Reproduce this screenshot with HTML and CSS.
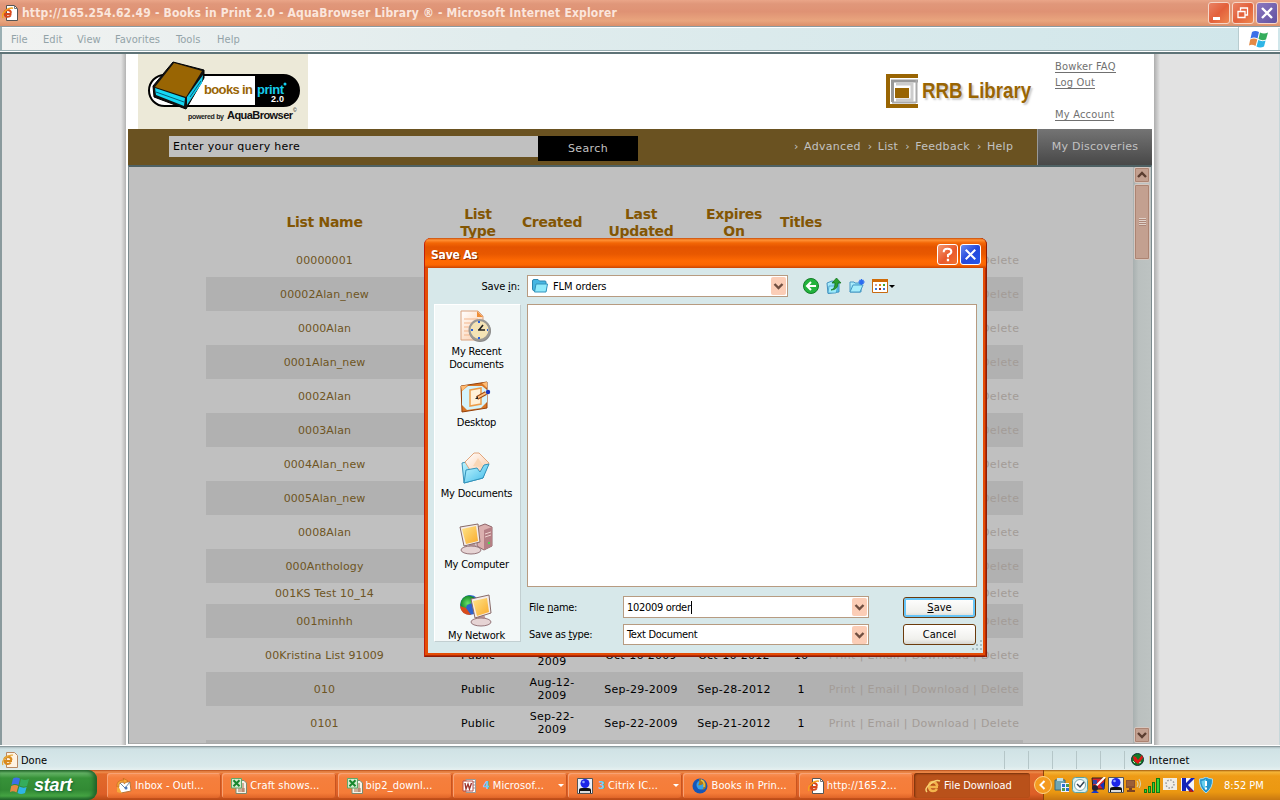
FILE: index.html
```html
<!DOCTYPE html>
<html lang="en">
<head>
<meta charset="utf-8">
<title>Books in Print 2.0</title>
<link rel="stylesheet" href="styles.css">
</head>
<body>
<svg width="0" height="0" class="defs">
  <defs>
    <linearGradient id="gold" x1="0" y1="0" x2="1" y2="1"><stop offset="0" stop-color="#ffe488"/><stop offset="1" stop-color="#f9ab2c"/></linearGradient>
    <linearGradient id="aqua" x1="0" y1="0" x2="1" y2="1"><stop offset="0" stop-color="#c4f7ff"/><stop offset="1" stop-color="#3bb8e8"/></linearGradient>
    <linearGradient id="paper" x1="0" y1="0" x2="1" y2="1"><stop offset="0" stop-color="#fff"/><stop offset="1" stop-color="#fbc9a4"/></linearGradient>
    <radialGradient id="leaf"><stop offset="0" stop-color="#6be36b"/><stop offset="1" stop-color="#128a28"/></radialGradient>
    <symbol id="flag" viewBox="0 0 20 18">
      <path d="M3 2Q6 0 10 2L8.500 8.500Q5 6.500 1.500 8.500Z" fill="#3b6fe8"/>
      <path d="M11 2.500Q15 4.500 19 2.500L17 9.500Q13 11 9.500 9Z" fill="#35ad5c"/>
      <path d="M1.200 9.500Q5 7.500 8.300 9.500L6.500 16Q3 14 0 15.500Z" fill="#e58a45"/>
      <path d="M9.300 10Q13 12 16.600 10.500L15 16.500Q11 18.500 7.500 16.500Z" fill="#2fb5e6"/>
    </symbol>
    <symbol id="ie" viewBox="0 0 16 16">
      <path d="M4.500.5h8l3 3v12h-11z" fill="#fff" stroke="#555"/><path d="M12.500.5v3h3" fill="none" stroke="#777"/>
      <path d="M9.500 9H2.500Q3 11.800 5.800 11.800 7.800 11.800 8.800 10.300M2.400 7.800Q3 5 5.800 5T9 7.800" fill="none" stroke="#d8461a" stroke-width="2"/>
      <path d="M1 13Q-.8 10 3 6.200T11 3.200" fill="none" stroke="#f6a21e" stroke-width="1.400"/>
    </symbol>
    <symbol id="excel" viewBox="0 0 16 16">
      <path d="M5 2.500h8l2.500 2.500v10.500H5z" fill="#f6f3e8" stroke="#7a8a70"/><path d="M7 11h7M7 13h7M12 5v9" stroke="#a56b4a"/>
      <path d="M.5.500h10v9.500H.5z" fill="#d3ecd0" stroke="#5fa968"/><path d="M2.500 2.200l6 6M8.500 2.200l-6 6" stroke="#17862c" stroke-width="2"/>
    </symbol>
    <symbol id="citrix" viewBox="0 0 16 16">
      <path d="M.5.500h15v15H.5z" fill="#e9eef8" stroke="#555"/><path d="M2 15v-3q0-2 3-2h6q3 0 3 2v3z" fill="#111"/><path d="M3 13h10v2H3z" fill="#ddd"/><circle cx="8" cy="5.500" r="4.500" fill="#1b25e8"/><circle cx="6.500" cy="4" r="1.300" fill="#8ea2ff"/>
    </symbol>
    <symbol id="down" viewBox="0 0 15 18"><rect width="15" height="18" rx="2" fill="#fbcdb6"/><path d="M3.500 7l4 4 4-4" fill="none" stroke="#6f4e40" stroke-width="2.400"/></symbol>
  </defs>
</svg>

<div class="screen">
  <header class="titlebar">
    <svg class="i16"><use href="#ie"/></svg>
    <span class="title-text">http://165.254.62.49 - Books in Print 2.0 - AquaBrowser Library ® - Microsoft Internet Explorer</span>
    <div class="win-buttons">
      <svg viewBox="0 0 20 20" class="wb red"><path d="M4 14h7v3H4z" fill="#fff"/></svg>
      <svg viewBox="0 0 20 20" class="wb red"><path d="M7.500 7.500V5h7v7H12M5 8.500h7v6H5z" fill="none" stroke="#fff" stroke-width="1.300"/></svg>
      <svg viewBox="0 0 20 20" class="wb violet"><path d="M5 5l10 10M15 5L5 15" stroke="#fff" stroke-width="2.400"/></svg>
    </div>
  </header>

  <nav class="menubar">
    <span class="m1">File</span><span class="m2">Edit</span><span class="m3">View</span><span class="m4">Favorites</span><span class="m5">Tools</span><span class="m6">Help</span>
    <div class="throbber"><svg width="20" height="18"><use href="#flag"/></svg></div>
  </nav>

  <main class="viewport">
    <div class="page">
      <div class="masthead">
        <div class="logo">
          <svg width="170" height="75" viewBox="0 0 170 75">
            <rect x="11" y="21" width="150" height="31" rx="15.500" fill="#fff" stroke="#000" stroke-width="2"/>
            <path d="M117 21h28.500a15.500 15.500 0 0 1 0 31H117z" fill="#000"/>
            <path d="M35 8L66 16 66 24 48 55 16 43 15 32Z" fill="#111" stroke="#000" stroke-linejoin="round"/>
            <path d="M36 9L64 17 48 43 17 33Z" fill="#996503"/>
            <path d="M17 34L47 44 46 52 18 41Z" fill="#15d8f4"/><path d="M49 43L65 21 64 29 49 51Z" fill="#15cdec"/>
            <path d="M18 38l28 10M52 43l11-16" stroke="#085c78"/>
            <text x="66" y="40" class="lg-books" textLength="49">books in</text>
            <text x="119" y="40" class="lg-print" textLength="27">print</text><circle cx="147" cy="30" r="1.500" fill="#15cdec"/>
            <text x="133" y="48" class="lg-ver" textLength="13">2.0</text>
            <text x="50" y="65" class="lg-pow" textLength="36">powered by</text>
            <text x="89" y="65" class="lg-aqua" textLength="66">AquaBrowser</text>
            <text x="155" y="58" class="lg-c">©</text>
          </svg>
        </div>
        <div class="library">
          <svg width="32" height="34" viewBox="0 0 32 34"><path d="M32 2H2v30h30" fill="none" stroke="#996503" stroke-width="4"/><path d="M32 7H6.500v21" fill="none" stroke="#999" stroke-width="3"/><path d="M10 10h16v16H10" fill="none" stroke="#ccc" stroke-width="3"/><path d="M30.500 6v23M6 28.500h24" stroke="#aaa" stroke-width="2"/><path d="M9 14h14v10H9z" fill="#996503"/></svg>
          <span>RRB Library</span>
        </div>
        <div class="account"><a>Bowker FAQ</a><a>Log Out</a><a class="apart">My Account</a></div>
      </div>

      <div class="searchbar">
        <div class="query">Enter your query here</div>
        <div class="search-btn">Search</div>
        <div class="links"><span>Advanced</span><span>List</span><span>Feedback</span><span>Help</span></div>
        <div class="discoveries">My Discoveries</div>
      </div>

      <div class="results">
        <div class="table">
          <div class="row head"><span>List Name</span><span>List<br>Type</span><span>Created</span><span>Last<br>Updated</span><span>Expires<br>On</span><span>Titles</span><span></span></div>
          <div class="row"><b>00000001</b><i>Print | Email | Download | Delete</i></div>
          <div class="row"><b>00002Alan_new</b><i>Print | Email | Download | Delete</i></div>
          <div class="row"><b>0000Alan</b><i>Print | Email | Download | Delete</i></div>
          <div class="row"><b>0001Alan_new</b><i>Print | Email | Download | Delete</i></div>
          <div class="row"><b>0002Alan</b><i>Print | Email | Download | Delete</i></div>
          <div class="row"><b>0003Alan</b><i>Print | Email | Download | Delete</i></div>
          <div class="row"><b>0004Alan_new</b><i>Print | Email | Download | Delete</i></div>
          <div class="row"><b>0005Alan_new</b><i>Print | Email | Download | Delete</i></div>
          <div class="row"><b>0008Alan</b><i>Print | Email | Download | Delete</i></div>
          <div class="row"><b>000Anthology</b><i>Print | Email | Download | Delete</i></div>
          <div class="row short"><b>001KS Test 10_14</b><i>Print | Email | Download | Delete</i></div>
          <div class="row"><b>001minhh</b><i>Print | Email | Download | Delete</i></div>
          <div class="row"><b>00Kristina List 91009</b><span>Public</span><span>Oct-16-<br>2009</span><span>Oct-16-2009</span><span>Oct-16-2012</span><span>16</span><i>Print | Email | Download | Delete</i></div>
          <div class="row"><b>010</b><span>Public</span><span>Aug-12-<br>2009</span><span>Sep-29-2009</span><span>Sep-28-2012</span><span>1</span><i>Print | Email | Download | Delete</i></div>
          <div class="row"><b>0101</b><span>Public</span><span>Sep-22-<br>2009</span><span>Sep-22-2009</span><span>Sep-21-2012</span><span>1</span><i>Print | Email | Download | Delete</i></div>
          <div class="row last"></div>
        </div>
        <div class="scroll">
          <div class="arrow"><svg width="12" height="12" viewBox="0 0 12 12"><path d="M2 8l4-4 4 4" fill="none" stroke="#5b3d30" stroke-width="2.400"/></svg></div>
          <div class="thumb"><div class="grip"></div></div>
          <div class="arrow bottom"><svg width="12" height="12" viewBox="0 0 12 12"><path d="M2 4l4 4 4-4" fill="none" stroke="#5b3d30" stroke-width="2.400"/></svg></div>
        </div>
      </div>
    </div>
  </main>

  <footer class="status">
    <svg class="i16" viewBox="0 0 16 16"><path d="M4.500.500h8l3 3v12h-11z" fill="#fff3e2" stroke="#b98962"/><path d="M10 9H2.500Q3 12 5.700 12 7.700 12 8.700 10.500M2.300 7.500Q3 4.800 6 4.800T9.500 8" fill="none" stroke="#d98a1c" stroke-width="2.200"/><path d="M1 13Q-.8 10 3 6.200T11 3.200" fill="none" stroke="#e8ab3c" stroke-width="1.200"/></svg>
    <span class="done">Done</span>
    <div class="panes"><s></s><s></s><s></s><s></s><s></s></div>
    <div class="zone"><svg width="13" height="13" viewBox="0 0 13 13"><circle cx="6.500" cy="6.500" r="6" fill="#137a26" stroke="#133"/><path d="M2 3l3 1 2 3 4-5 1 3-5 6-4-3z" fill="#e01818"/><path d="M2 8l2 2M8 10l2-1" stroke="#bfe6c0"/></svg><span>Internet</span></div>
  </footer>

  <footer class="taskbar">
    <div class="start"><svg width="20" height="19" viewBox="0 0 20 18"><use href="#flag"/></svg><span>start</span></div>
    <div class="tasks">
      <div class="task"><svg class="i16" viewBox="0 0 16 16"><path d="M3 4h11l1 9-10 2-3-2z" fill="#fff" stroke="#b8763a"/><path d="M3 4l6 6 5-6" fill="none" stroke="#6b8aa8"/><path d="M1 9q-1-7 7-7l-1-2 5 3-4 3V4Q2 4 3 9z" fill="#f6a93a" stroke="#b35b12" stroke-width=".5"/><path d="M1 9v5l5 1.500-3-6z" fill="#f6a93a"/><circle cx="10" cy="10" r="1.500" fill="#4a76b8"/></svg><span>Inbox - Outl...</span></div>
      <div class="task"><svg class="i16"><use href="#excel"/></svg><span>Craft shows...</span></div>
      <div class="task"><svg class="i16"><use href="#excel"/></svg><span>bip2_downl...</span></div>
      <div class="task"><svg class="i16" viewBox="0 0 16 16"><path d="M4 1.500h9.500v13H4z" fill="#fff" stroke="#999"/><path d="M11 4h2M11 7h2M11 10h2" stroke="#999"/><path d="M1 3h10v10H1z" fill="#fff" stroke="#b64a42"/><path d="M3 5l1 6 2-5 1.500 5 2-6" fill="none" stroke="#9e3630" stroke-width="1.400"/></svg><em>4</em><span>Microsof...</span><u></u></div>
      <div class="task"><svg class="i16"><use href="#citrix"/></svg><em>3</em><span>Citrix IC...</span><u></u></div>
      <div class="task"><svg class="i16" viewBox="0 0 16 16"><circle cx="8" cy="8" r="7.500" fill="#1656b8"/><circle cx="9" cy="7" r="4.500" fill="#35a0e6"/><path d="M7 1q5 0 7 5 1 5-4 6 3-3 1-6-3 2-5 1 2-2 1-6z" fill="#a8781c"/><path d="M9 2q4 1 3 7" fill="none" stroke="#ecc23c" stroke-width="1.500"/></svg><span>Books in Prin...</span></div>
      <div class="task"><svg class="i16"><use href="#ie"/></svg><span>http://165.2...</span></div>
      <div class="task active"><svg class="i16" viewBox="0 0 16 16"><path d="M13 9H4q.5 4 4 4 2.500 0 4-2M4 7.500Q5 4 8 4t4.500 4" fill="none" stroke="#f3b54c" stroke-width="2.500"/><path d="M2 14q-3-3 3-8t10-3" fill="none" stroke="#f8d274" stroke-width="1.500"/></svg><span>File Download</span></div>
    </div>
    <div class="tray">
      <svg class="chev" viewBox="0 0 18 18"><circle cx="9" cy="9" r="8.500" fill="#f49a1e" stroke="#fcd48a"/><path d="M10.500 5L6.500 9l4 4" fill="none" stroke="#fff" stroke-width="2"/></svg>
      <svg class="i16" viewBox="0 0 16 16"><path d="M1 3h10v10H1z" fill="#6fa6b4" stroke="#3e6876"/><path d="M3 1h6v3H3z" fill="#bfe0ea"/><path d="M7 6h8v9H7z" fill="#eef"/><path d="M8 7h3v3H8zM12 11h3v3h-3z" fill="#2a6fd0"/><path d="M12 7h3v3h-3zM8 11h3v3H8z" fill="#4a9c50"/></svg>
      <svg class="i16" viewBox="0 0 16 16"><rect x=".5" y=".5" width="15" height="15" rx="3" fill="#d9eeee" stroke="#59a3a5"/><circle cx="8" cy="8" r="5.500" fill="#fff" stroke="#7ca9ae"/><path d="M5 7l3 3 4-5" fill="none" stroke="#345" stroke-width="1.500"/></svg>
      <svg class="i16" viewBox="0 0 16 16"><path d="M2 1h13l-1 11H3z" fill="#d4252d" stroke="#222"/><path d="M15 0L5 10" stroke="#fff" stroke-width="2"/><path d="M10 8l4-3v8" fill="#1533c0"/><circle cx="5" cy="11" r="3" fill="#223"/><path d="M1 16q4-5 8 0" fill="#1537c8"/><path d="M3 3h4v4H3z" fill="#3545a5"/></svg>
      <svg class="i16"><use href="#citrix"/></svg>
      <svg class="i16" viewBox="0 0 16 16"><path d="M0 3h9v8H0z" fill="#8b5230"/><path d="M1 4h7v5H1z" fill="#9c6038"/><path d="M3 11h3v2h3v2H1v-2h2z" fill="#7c4223"/><path d="M11 4q2 3 0 6M13 2q3 5 0 9" fill="none" stroke="#d8d0a8" stroke-width="1.200"/></svg>
      <svg class="i16" viewBox="0 0 16 16"><path d="M0 12h3v4H0zM4 9h3v7H4zM8 5h3v11H8zM12 1h4v15h-4z" fill="#117a12"/><path d="M1 13h1v2H1zM5 10h1v5H5zM9 6h1v9H9zM13 2h2v13h-2z" fill="#35d236"/></svg>
      <svg class="i16" viewBox="0 0 16 16"><path d="M1 1h14v12H1z" fill="#f0ede5"/><circle cx="8" cy="7" r="4" fill="none" stroke="#999" stroke-width="1.500" stroke-dasharray="1.500 1.600"/></svg>
      <svg class="i16" viewBox="0 0 16 16"><path d="M1 1h13v13H1z" fill="#f3f3fa"/><path d="M2 1h4v5l5-5h4L8 8l6 6H9L6 10v4H2z" fill="#1524b8"/><path d="M10 11l4 4h-5z" fill="#b01818"/></svg>
      <svg class="i16" viewBox="0 0 16 16"><path d="M8 0q3 2 6.500 2Q15 11 8 16 1 11 1.500 2 5 2 8 0z" fill="#2394cc" stroke="#a7dcf0"/><path d="M8 2v11q-5-4-4.500-9Q6 4 8 2z" fill="#68d0ee"/><path d="M8 4v5M8 10.500v2" stroke="#fff" stroke-width="2"/></svg>
      <span class="clock">8:52 PM</span>
    </div>
  </footer>

  <section class="dialog">
    <div class="dlg-title"><span>Save As</span>
      <svg class="db help" viewBox="0 0 20 20"><path d="M6 7.500Q6 4 10 4t4 3.200Q14 9 10.500 10.500V13" fill="none" stroke="#fff" stroke-width="2.200"/><path d="M9.300 14.500h2.400V17H9.300z" fill="#fff"/></svg>
      <svg class="db close" viewBox="0 0 20 20"><path d="M5 5l10 10M15 5L5 15" stroke="#fff" stroke-width="2.200"/></svg>
    </div>
    <div class="dlg-body">
      <div class="tool-row">
        <label>Save <u>i</u>n:</label>
        <div class="combo folder">
          <svg width="16" height="14" viewBox="0 0 16 14"><path d="M.5 2Q.5.500 2 .500h4L7.500 2H13q1 0 1 1v9H3Q.5 12 .5 10z" fill="#46b6e2" stroke="#2d86ae"/><path d="M4 5h11.500l-1.500 8H2.500z" fill="#90eafb" stroke="#3292bc"/></svg>
          <span>FLM orders</span><svg class="drop"><use href="#down"/></svg>
        </div>
        <div class="tools">
          <svg class="i16" viewBox="0 0 16 16"><circle cx="8" cy="8" r="7.500" fill="#22b33d" stroke="#147d28"/><path d="M13 8H4.500M8 4L4 8l4 4" fill="none" stroke="#fff" stroke-width="2"/></svg>
          <svg class="i16" viewBox="0 0 16 16"><path d="M1 5l5-2 7 2v9L2 15.500z" fill="url(#aqua)" stroke="#4292c0"/><path d="M3 8h9l-2 7H2z" fill="#9ceafb" stroke="#4292c0" stroke-width=".7"/><path d="M5 12q4-1 4-7H6l4.500-5L15 5h-3q0 7-7 7z" fill="#2aa02f" stroke="#0b6f18" stroke-width=".7"/></svg>
          <svg class="i16" viewBox="0 0 16 16"><path d="M1 4h4l1 1h6v9H1z" fill="url(#aqua)" stroke="#4698c4"/><path d="M4 7h10l-3 7H1z" fill="#a5edfb" stroke="#4698c4"/><path d="M12.500 1v6M9.500 4h6M10.500 2l4 4M14.500 2l-4 4" stroke="#2b6cf0" stroke-width="1.300"/></svg>
          <svg class="views" viewBox="0 0 24 16"><path d="M.5 1.500h15v13H.5z" fill="#fff" stroke="#c86a10"/><path d="M0 1h16v3H0z" fill="#d06a06"/><path d="M3 6h2v2H3z" fill="#c9a0a0"/><path d="M7 6h2v2H7z" fill="#e08a10"/><path d="M11 6h2v2h-2z" fill="#3ba52c"/><path d="M3 10h2v2H3z" fill="#3779e0"/><path d="M7 10h2v2H7z" fill="#a32b12"/><path d="M11 10h2v2h-2z" fill="#3c73d0"/><path d="M17 7h6l-3 3z" fill="#000"/></svg>
        </div>
      </div>
      <div class="work">
        <aside class="places">
          <div class="place"><svg viewBox="0 0 32 32"><path d="M2 1h17l5 5v24H2z" fill="url(#paper)" stroke="#d9a27e"/><path d="M18 1l6 6h-6z" fill="#ef8e37"/><path d="M5 9h14M5 13h12M5 17h8M5 21h6M5 25h7" stroke="#f3b78d"/><circle cx="21" cy="21" r="11" fill="#888"/><circle cx="20.500" cy="20" r="10" fill="#f4e3b5" stroke="#9a9894" stroke-width="2"/><path d="M20 20l4-5M19 20h7" stroke="#222" stroke-width="1.600"/><path d="M20 11v2M20 27v2M12 20h2M28 20h1" stroke="#2860dc" stroke-width="2"/></svg><span>My Recent<br>Documents</span></div>
          <div class="place"><svg viewBox="0 0 32 32"><path d="M2 5l26-4v26L3 31z" fill="#d77627" stroke="#954109"/><path d="M3 10l6-5h14l5 4v12l-6 6-14 2-5-5z" fill="#d4f3fb"/><path d="M2 5l7-1-6 6zM23 2l5-1v6z" fill="#ffbd75"/><path d="M11 9l11-2v16l-11 2z" fill="#fff0d8" stroke="#ed9d4a" stroke-width="1.500"/><path d="M18 17l9-5" stroke="#a34b12" stroke-width="4"/><path d="M18 17l9-5" stroke="#ffc180" stroke-width="2"/><path d="M16 18l3-3v3z" fill="#222"/><circle cx="29" cy="11" r="2.200" fill="#1a35bd"/></svg><span>Desktop</span></div>
          <div class="place"><svg viewBox="0 0 32 32"><path d="M3 11l9-2 16 3-4 14-19 5z" fill="url(#aqua)" stroke="#3c94b9"/><path d="M6 10L15 1h5l10 10-4 9-12 3z" fill="url(#paper)" stroke="#e1a67c"/><path d="M14 14l5-8 7 10" fill="#fad6b5"/><path d="M5 31l2-13 11-2 3 4 4-7 5-1-6 14z" fill="url(#aqua)" stroke="#3293bb"/></svg><span>My Documents</span></div>
          <div class="place"><svg viewBox="0 0 32 32"><path d="M18 4l8-3 7 3v19l-8 4-7-4z" fill="#dbb0af" stroke="#8e6569"/><path d="M25 7l8-3v19l-8 4z" fill="#b57f85"/><path d="M26 11l6-2M26 14l6-2" stroke="#efd2cf"/><circle cx="30" cy="20" r="1.200" fill="#46e04c"/><path d="M10 20h6l2 6H9z" fill="#bd999b"/><ellipse cx="12" cy="27" rx="10" ry="4" fill="#e6d4d4" stroke="#957579"/><path d="M1 4l18-3 2 18-16 4z" fill="#f4ece8" stroke="#876a69"/><path d="M3 6l14-3 2 15-12 3z" fill="url(#gold)"/></svg><span>My Computer</span></div>
          <div class="place"><svg viewBox="0 0 32 32"><circle cx="11" cy="11" r="10" fill="#2d63ce"/><path d="M4 4q5-5 12 0l-3 5-5 2-2 6Q-2 11 4 4z" fill="url(#leaf)"/><path d="M1 12l6 2 5 7Q2 21 1 12z" fill="#d94c1b"/><path d="M19 20h6l2 6h-9z" fill="#bd999b"/><ellipse cx="22" cy="28" rx="10" ry="4" fill="#e6d4d4" stroke="#957579"/><path d="M12 5l18-4 2 18-16 5z" fill="#f4ece8" stroke="#876a69"/><path d="M14 7l14-3 2 14-12 4z" fill="url(#gold)"/></svg><span>My Network</span></div>
        </aside>
        <div class="right">
          <div class="files"></div>
          <div class="fields">
            <label>File <u>n</u>ame:</label><div class="combo"><span class="caret">102009 order</span><svg class="drop"><use href="#down"/></svg></div><div class="button default"><span><u>S</u>ave</span></div>
            <label>Save as <u>t</u>ype:</label><div class="combo"><span>Text Document</span><svg class="drop"><use href="#down"/></svg></div><div class="button"><span>Cancel</span></div>
          </div>
        </div>
      </div>
      <svg class="resize" viewBox="0 0 12 12"><path d="M9 0h2v2H9zM5 4h2v2H5zM9 4h2v2H9zM1 8h2v2H1zM5 8h2v2H5zM9 8h2v2H9z" fill="#a7bcc0"/></svg>
    </div>
  </section>
</div>
</body>
</html>
```

FILE: styles.css
```css
* { box-sizing: border-box; }
body { margin: 0; overflow: hidden; font-family: "DejaVu Sans Condensed", "DejaVu Sans", sans-serif; font-size: 11px; color: #000; }
.defs { position: absolute; }
.screen { position: relative; width: 1280px; height: 800px; display: flex; flex-direction: column; background: #e2e2e2; }
.i16 { width: 16px; height: 16px; flex: none; }
svg { display: block; flex: none; }
span { white-space: nowrap; }

.titlebar { height: 26px; flex: none; display: flex; align-items: center; padding: 0 2px; background: linear-gradient(#eaa588 0, #e0977a 15%, #df9274 45%, #e9a57e 80%, #dc8f6a 100%); }
.title-text { margin-left: 4px; font-weight: bold; font-size: 12px; letter-spacing: .18px; color: #fbe6dc; }
.win-buttons { margin-left: auto; display: flex; gap: 2px; }
.wb { width: 22px; height: 22px; border: 1px solid #f6d6c8; border-radius: 3px; }
.red { background: linear-gradient(135deg, #e98365, #e3603b 50%, #ee8850); }
.violet { background: linear-gradient(135deg, #8a78c0, #6252a0); }

.menubar { height: 28px; flex: none; display: flex; align-items: center; padding: 0 2px 2px 11px; color: #93a3a8; background: linear-gradient(90deg, #f1f2f1, #e0eced 40%, #d0e6ea); border-top: 1px solid #8c9ba0; border-bottom: 2px solid #5e7377; box-shadow: inset 0 -1px #fff, inset 0 -2px #9aafb3, inset 2px 0 #9aafb3, inset 0 1px #fff; }
.menubar span { flex: none; padding-top: 1px; letter-spacing: .05px; }
.m1 { width: 32px; } .m2 { width: 34px; } .m3 { width: 38px; } .m4 { width: 61px; } .m5 { width: 41px; }
.throbber { margin-left: auto; width: 40px; height: 23px; background: #fff; border-left: 1px solid #b8cccf; display: flex; align-items: center; justify-content: center; }

.viewport { height: 691px; flex: none; padding: 0 118px 0 120px; border-left: 2px solid #8a9a9d; border-right: 1px solid #c7d7da; background: #e2e2e2; }
.page { width: 1039px; height: 691px; margin-left: -1px; padding: 0 8px 0 7px; background: linear-gradient(90deg, #e2e2e2 0, #b4b4b4 5px, #fff 5px, #fff 1033px, #adadad 1033px, #e2e2e2 1039px); }
.masthead { height: 75px; display: flex; padding-left: 10px; }
.logo { width: 170px; height: 75px; background: #ece9d8; }
.lg-books, .lg-print { font: bold 13px "Liberation Sans", sans-serif; fill: #996503; }
.lg-print { fill: #15cdec; }
.lg-ver { font: bold 9px "Liberation Sans", sans-serif; fill: #fff; }
.lg-pow { font: bold 7px "Liberation Sans", sans-serif; fill: #222; }
.lg-aqua { font: bold 11px "Liberation Sans", sans-serif; fill: #111; }
.lg-c { font: 5px "Liberation Sans", sans-serif; }
.library { margin-left: 578px; padding-top: 20px; width: 169px; display: flex; gap: 4px; color: #996503; font: bold 22px/34px "Liberation Sans", sans-serif; text-shadow: 2px 2px 2px #ccc; }
.library span { transform: scaleX(.85); transform-origin: left; }
.account { display: flex; flex-direction: column; align-items: flex-start; padding-top: 6px; color: #707070; letter-spacing: .2px; }
.account a { height: 13px; line-height: 13px; border-bottom: 1px solid #707070; margin-bottom: 3px; white-space: nowrap; }
.account .apart { margin-top: 16px; }

.searchbar { height: 36px; display: flex; align-items: flex-start; background: #6a5221; font-family: "DejaVu Sans", sans-serif; color: #c2c2c2; }
.query { margin: 7px 0 0 41px; width: 369px; height: 21px; padding-left: 4px; line-height: 22px; background: #c0c0c0; color: #000; letter-spacing: .28px; }
.search-btn { margin-top: 7px; width: 100px; height: 25px; line-height: 26px; text-align: center; background: #000; letter-spacing: .4px; }
.links { margin-left: 156px; width: 243px; display: flex; line-height: 35px; letter-spacing: .3px; }
.links span::before { content: "›"; display: inline-block; width: 10px; line-height: 1; }
.links span { margin-right: 7px; }
.discoveries { width: 115px; height: 36px; line-height: 35px; text-align: center; border-left: 1px solid #999; background: linear-gradient(#747474, #484848); letter-spacing: .25px; }

.results { height: 579px; display: flex; border: 1px solid #7b8a8e; border-top: 2px solid #4e6164; border-bottom-color: #aaa; background: #c0c0c0; overflow: hidden; padding-left: 77px; font-family: "DejaVu Sans", sans-serif; }
.table { width: 817px; padding-top: 37px; height: 576px; overflow: hidden; }
.row { height: 34px; display: grid; grid-template-columns: 237px 70px 78px 100px 86px 48px 198px; align-items: center; text-align: center; line-height: 13px; }
.row:nth-child(odd) { background: #b1b1b1; }
.row span { letter-spacing: .25px; }
.row.head { height: 39px; padding-bottom: 2px; background: none; color: #835604; font-weight: bold; font-size: 14px; line-height: 17px; }
.row.head span { letter-spacing: -.3px; }
.row b { font-weight: normal; color: #6e5523; letter-spacing: .1px; }
.row i { font-style: normal; color: #a39c97; grid-column: 7; white-space: nowrap; letter-spacing: .36px; }
.row.short { height: 21px; }
.row.last { height: 4px; }
.scroll { margin-left: auto; width: 18px; height: 576px; padding: 0 1px; display: flex; flex-direction: column; gap: 1px; background: linear-gradient(90deg, #a8b0b0, #bac0bf 30%, #bdc3c2); }
.arrow, .thumb { border: 1px solid #d5c7c0; border-radius: 2px; outline: 1px solid #ad8472; outline-offset: -2px; background: #c3a090; display: flex; align-items: center; justify-content: center; }
.arrow { height: 16px; }
.thumb { height: 76px; }
.bottom { margin-top: auto; }
.grip { width: 7px; height: 8px; background: repeating-linear-gradient(#e0d2ca 0 1px, #ad8778 1px 2px); }

.status { height: 25px; flex: none; display: flex; align-items: center; padding: 3px 0 0 2px; border-top: 1px solid #fff; background: linear-gradient(#9aa8ab 0, #d0e2e5 3px, #d9e9eb 20px, #e6f0f0); box-shadow: inset 0 1px #8c9b9f; }
.done { margin-left: 3px; padding-top: 1px; }
.panes { margin-left: auto; display: flex; }
.panes s { width: 24px; height: 18px; border-left: 1px solid #b5c6c8; }
.zone { width: 156px; height: 18px; display: flex; align-items: center; gap: 5px; border-left: 1px solid #b5c6c8; padding-left: 6px; }
.zone span { letter-spacing: .15px; padding-top: 1px; }

.taskbar { height: 30px; flex: none; display: flex; background: linear-gradient(#b84c18 0, #ee8d4d 2px, #e26a2b 4px, #dd5f27 24px, #b94a16 30px); color: #fff; }
.start { width: 97px; height: 30px; display: flex; align-items: center; padding-left: 10px; gap: 4px; border-radius: 0 9px 9px 0; background: linear-gradient(#2c7030, #66b467 3px, #379239 8px, #328a34 20px, #45a443 26px, #21682a); box-shadow: inset -3px 0 4px #1f602a; }
.start span { font: italic bold 18px/28px "Liberation Sans", sans-serif; letter-spacing: -.2px; text-shadow: 1px 1px 2px #163; }
.tasks { margin-left: 10px; width: 936px; display: flex; padding-top: 3px; gap: 1.300px; }
.task { width: 114px; height: 25px; flex: none; display: flex; align-items: center; padding-left: 9px; border-radius: 3px; background: linear-gradient(#f99258, #f57f3d 5px, #f57c38 20px, #df6428); box-shadow: inset 1px 1px #f8a274, inset -1px 0 #c95420; }
.task span { margin-left: 3px; letter-spacing: .12px; }
.task em { margin-left: 5px; font-style: normal; font-weight: bold; color: #69cdfa; }
.task em + span { margin-left: 3px; }
.task u { margin: 0 3px 0 auto; border: 3px solid transparent; border-top-color: #fff; border-bottom: 0; }
.task.active { width: 116px; padding-left: 11px; background: #b9511a; box-shadow: inset 1px 1px 2px #74300b; }
.task.active span { letter-spacing: -.1px; }
.tray { width: 237px; height: 30px; display: flex; align-items: center; gap: 2px; background: linear-gradient(#a35c10, #f5b538 2px, #ee9b16 6px, #eb9811 22px, #c87811); border-left: 1px solid #8d430d; }
.chev { width: 18px; height: 18px; margin-left: -10px; }
.clock { margin-left: 8px; }

.dialog { position: absolute; left: 424px; top: 238px; width: 563px; height: 419px; padding: 0 4px 4px; border-radius: 7px 7px 0 0; background: #e44c05; box-shadow: inset 1px 0 #c31e0a, inset -1px 0 #8e1c05, inset -2px 0 #b52b05, inset 0 -1px #8e1c05, inset 0 -2px #b52b05; }
.dlg-title { height: 30px; margin: 0 -3px; display: flex; align-items: center; gap: 2px; padding: 2px 5px 0 6px; border-radius: 6px 6px 0 0; background: linear-gradient(#c64c0b 0, #ff9235 2px, #f36605 5px, #e45400 9px, #e85800 16px, #ff6a03 23px, #fb6602 27px, #c94403 30px); color: #fff; font-weight: bold; font-size: 12px; }
.dlg-title span { margin-right: auto; padding-top: 2px; letter-spacing: -.2px; text-shadow: 1px 1px #8f2c00; }
.db { width: 21px; height: 21px; border: 1px solid #fff; border-radius: 3px; }
.help { background: linear-gradient(135deg, #f39a73, #e9592b 55%, #f1732f); }
.close { background: linear-gradient(135deg, #6b8df0, #2448dc 50%, #2558e8); }
.dlg-body { position: relative; height: 385px; padding: 7px 6px 0; background: #d7e8ea; font-size: 11px; }
.dlg-body span, .dlg-body label { font-family: "DejaVu Sans Condensed", sans-serif; letter-spacing: -.3px; }
.tool-row { height: 22px; display: flex; align-items: center; }
.tool-row label { width: 86px; text-align: right; margin-right: 7px; letter-spacing: -.15px; }
.combo { height: 22px; display: flex; align-items: center; padding: 0 1px 0 4px; border: 1px solid #b79b81; background: #fff; }
.folder { width: 261px; }
.folder .drop { margin-left: auto; }
.folder span { margin-left: 5px; letter-spacing: -.1px; }
.drop { width: 15px; height: 18px; margin-left: auto; }
.tools { margin-left: 15px; display: flex; gap: 7px; }
.views { width: 24px; height: 16px; }
.work { margin-top: 7px; display: flex; gap: 6px; }
.places { width: 87px; height: 338px; overflow: hidden; padding: 5px 2px 0 0; background: #f3f8f8; border: 1px solid #fff; border-right-color: #c2cfd1; border-bottom-color: #c2cfd1; text-align: center; line-height: 13px; }
.place { height: 71px; }
.place span { letter-spacing: -.2px; }
.place svg { width: 32px; height: 32px; margin: 0 0 3px 24px; overflow: visible; }
.files { width: 450px; height: 283px; border: 1px solid #b79b81; background: #fff; }
.fields { margin-top: 9px; display: grid; grid-template-columns: 96px 246px 73px; grid-template-rows: 22px 21px; row-gap: 6px; align-items: center; }
.fields label { padding-left: 2px; }
.fields .combo { height: 100%; padding-left: 3px; }
.fields .button { margin-left: 34px; }
.button { width: 73px; height: 21px; display: flex; align-items: center; justify-content: center; border: 1px solid #6b3b0c; border-radius: 3px; background: linear-gradient(#fff, #f0f0ec 75%, #d7d6d0); }
.button span { letter-spacing: 0; }
.default { box-shadow: inset 0 0 0 2px #68c6f8; }
.caret { border-right: 1px solid #000; }
.resize { position: absolute; right: 0; bottom: 1px; width: 12px; height: 12px; }
```
